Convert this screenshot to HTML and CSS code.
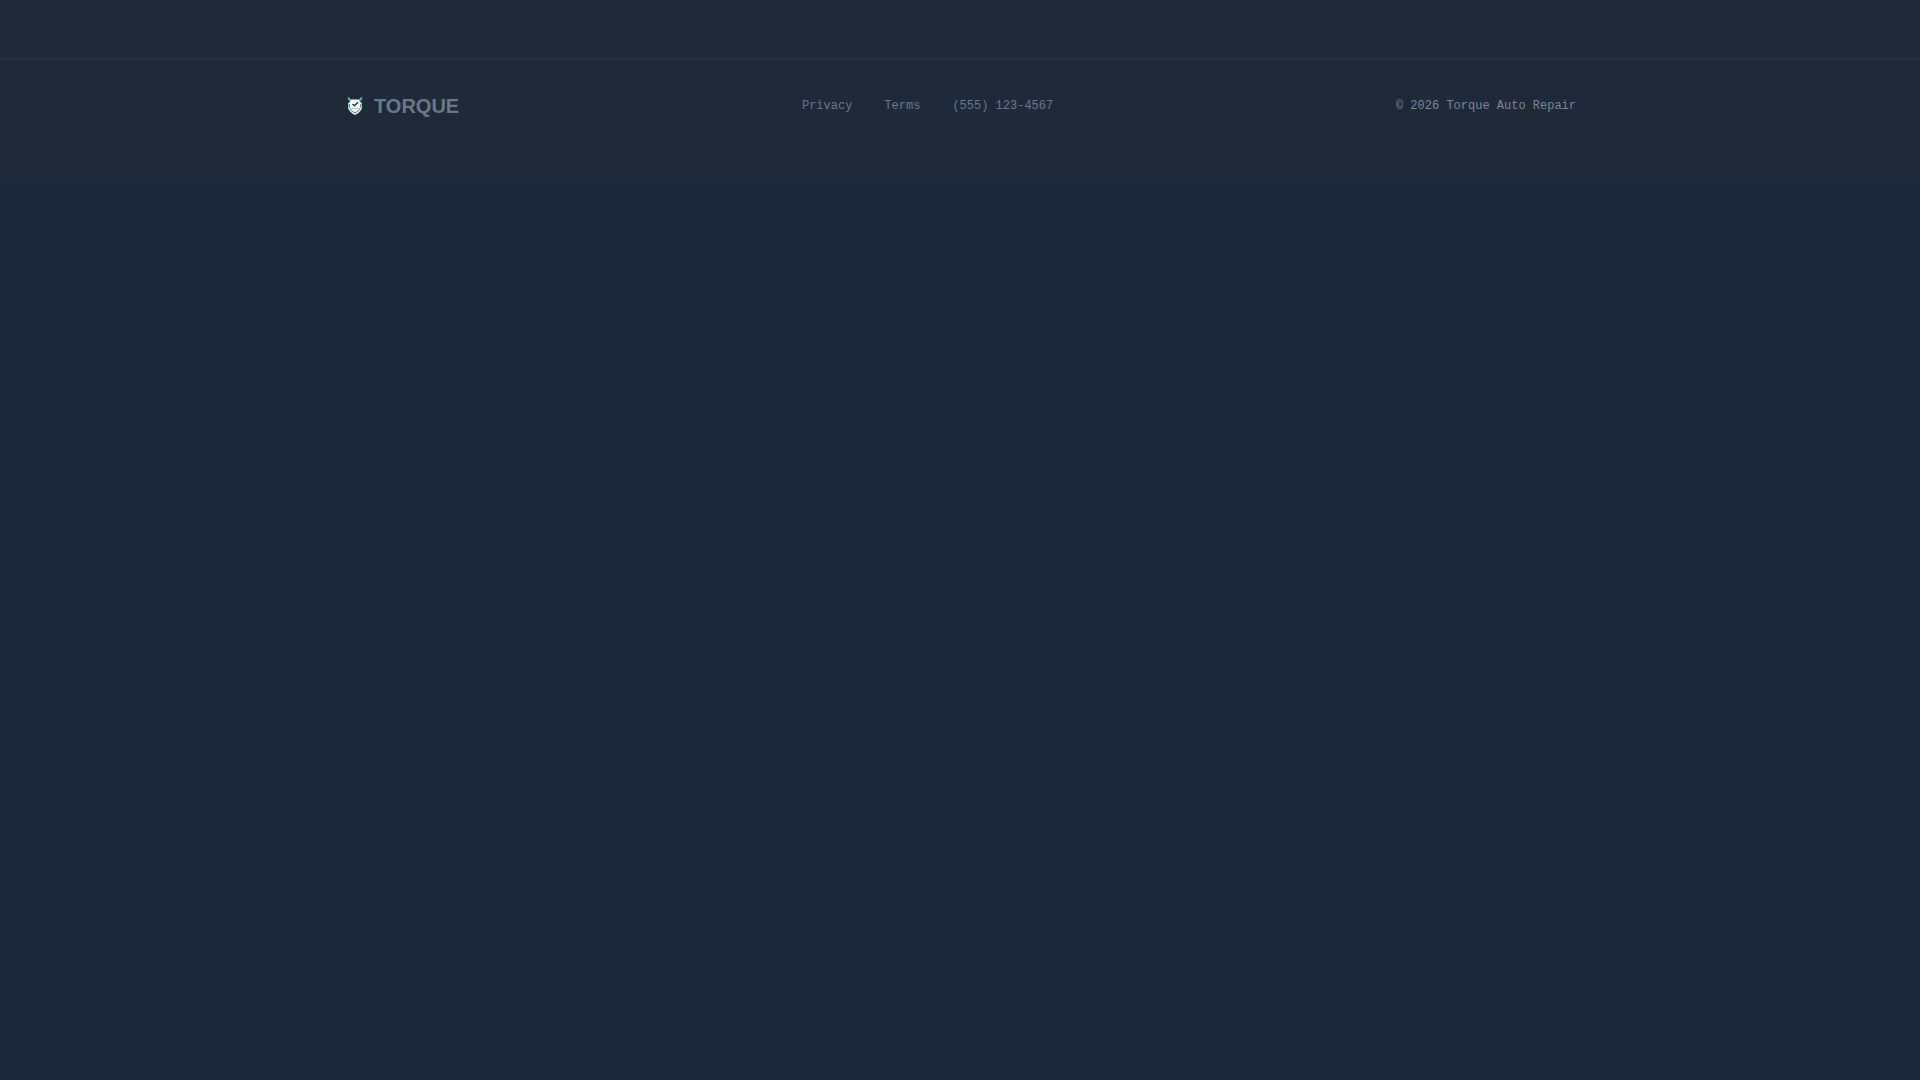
FILE: index.html
```html
<!DOCTYPE html>
<html lang="en">
<head>
    <meta charset="UTF-8">
    <meta name="viewport" content="width=device-width, initial-scale=1.0">
    <title>Torque Auto Repair</title>
    <link rel="stylesheet" href="styles.css">
</head>
<body>
    <main class="page-end"></main>

    <footer class="footer">
        <div class="footer-inner">
            <div class="brand">
                <svg class="brand-icon" viewBox="0 0 22 22" aria-hidden="true">
                    <!-- outer shield -->
                    <path d="M4 8 L6 7 H16 L18 8 V12 Q18 16.5 11 20 Q4 16.5 4 12 Z" fill="#e6f5fa"/>
                    <path d="M5.8 9 V12.5 Q6.4 15.8 11 18 Q15.6 15.8 16.2 12.5 V9" stroke="#3f535e" stroke-width="0.9" fill="none"/>
                    <!-- inner shield and horns -->
                    <path d="M6 4.5 H16 V12 Q15.6 15 11 17.2 Q6.4 15 6 12 Z" fill="#fbfdfd"/>
                    <path d="M4.2 2.5 L6.5 6 M17.8 2.5 L15.5 6" stroke="#49bfec" stroke-width="1.8" fill="none"/>
                    <path d="M4.5 8.5 V12 M17.5 8.5 V12" stroke="#6cc6e8" stroke-width="1" fill="none"/>
                    <!-- check mark -->
                    <path d="M8.5 9 L10.3 10.8 L14 7.2" stroke="#1e2a37" stroke-width="1.3" fill="none"/>
                    <path d="M7.5 13.5 H14.5" stroke="#a9d3b0" stroke-width="1"/>
                </svg>
                <span class="brand-name">TORQUE</span>
            </div>
            <nav class="footer-links">
                <a href="#privacy">Privacy</a>
                <a href="#terms">Terms</a>
                <a href="tel:5551234567">(555) 123-4567</a>
            </nav>
            <p class="copyright">© 2026 Torque Auto Repair</p>
        </div>
    </footer>
</body>
</html>
```
FILE: styles.css
```css
* {
    box-sizing: border-box;
    margin: 0;
    padding: 0;
}

body {
    font-family: "Liberation Sans", Arial, sans-serif;
    background-color: #1a2938;
    color: #6a798a;
}

.page-end {
    padding-top: 58px;
    background-color: #1e2a37;
}

.footer {
    padding: 32px 24px 64px;
    background-color: #1e2a37;
    border-top: 2px solid #263440;
}

.footer-inner {
    display: flex;
    align-items: center;
    justify-content: space-between;
    max-width: 1232px;
    margin: 0 auto;
}

.brand {
    display: flex;
    align-items: center;
    gap: 8px;
}

.brand-icon {
    width: 22px;
    height: 22px;
}

.brand-name {
    font-size: 20px;
    font-weight: bold;
    line-height: 28px;
}

.footer-links {
    display: flex;
    gap: 32px;
}

.footer-links a,
.copyright {
    font-family: "Liberation Mono", "Courier New", monospace;
    font-size: 12px;
    line-height: 18px;
}

.footer-links a {
    color: #6a798a;
    text-decoration: none;
}

.footer-links a:hover {
    color: #94a3b8;
}

.copyright {
    color: #7b8894;
}
```
